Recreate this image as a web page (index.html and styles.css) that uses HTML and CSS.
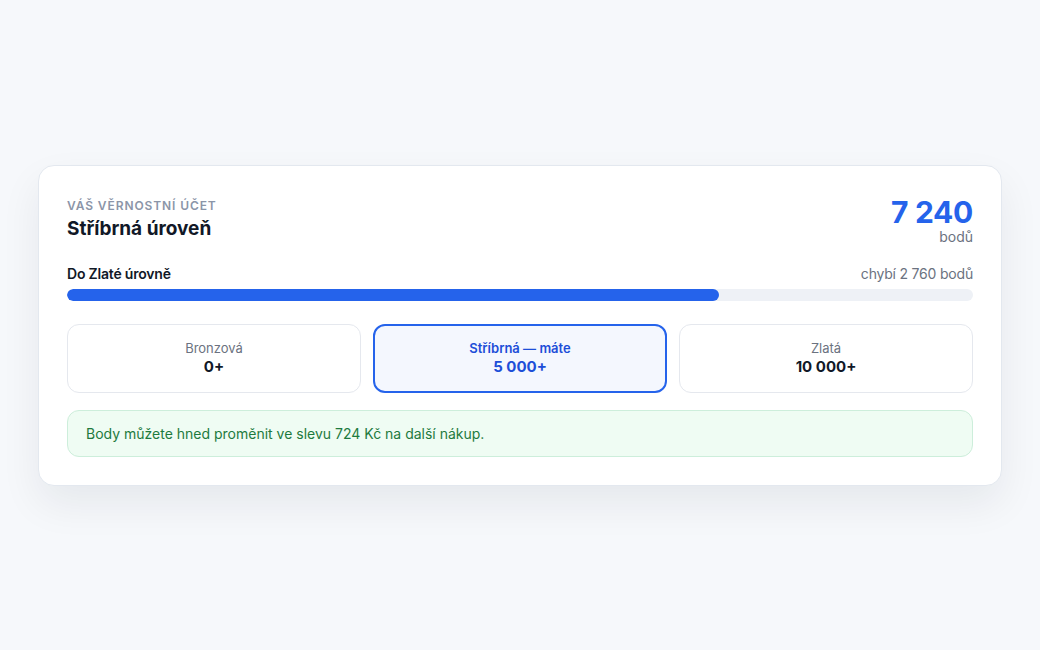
FILE: index.html
```html
<!DOCTYPE html>
<html lang="cs">
<head>
    <meta charset="UTF-8">
    <title>Věrnostní účet</title>
    <link rel="stylesheet" href="styles.css">
</head>
<body>
<div class="card">
    <div class="head">
        <div>
            <div class="eyebrow">Váš věrnostní účet</div>
            <h1 class="title">Stříbrná úroveň</h1>
        </div>
        <div class="points">
            <div class="points-num">7 240</div>
            <div class="points-unit">bodů</div>
        </div>
    </div>

    <div class="progress-row">
        <span class="progress-label">Do Zlaté úrovně</span>
        <span class="progress-left">chybí 2 760 bodů</span>
    </div>
    <div class="bar">
        <div class="bar-fill" style="width: 72%"></div>
    </div>

    <ul class="tiers">
        <li>
            <span class="tier-name">Bronzová</span>
            <span class="tier-min">0+</span>
        </li>
        <li class="current">
            <span class="tier-name">Stříbrná — máte</span>
            <span class="tier-min">5 000+</span>
        </li>
        <li>
            <span class="tier-name">Zlatá</span>
            <span class="tier-min">10 000+</span>
        </li>
    </ul>

    <div class="note">Body můžete hned proměnit ve slevu 724 Kč na další nákup.</div>
</div>
</body>
</html>
```

FILE: styles.css
```css
* {
    margin: 0;
    padding: 0;
    box-sizing: border-box;
}

html, body {
    height: 100%;
}

body {
    background-color: #f6f8fb;
    font-family: Inter, "Noto Sans", sans-serif;
    color: #0f172a;
    display: flex;
    align-items: center;
    justify-content: center;
}

.card {
    width: 964px;
    background-color: #fff;
    border: 1px solid #e3e8ef;
    border-radius: 16px;
    padding: 28px;
    box-shadow: 0 18px 40px rgba(15, 23, 42, 0.07);
}

.head {
    display: flex;
    justify-content: space-between;
    align-items: flex-start;
}

.eyebrow {
    font-size: 12px;
    line-height: 16px;
    font-weight: 600;
    letter-spacing: 0.9px;
    text-transform: uppercase;
    color: #8b95a8;
    margin-top: 4px;
}

.title {
    font-size: 19px;
    line-height: 26px;
    font-weight: 700;
    color: #111827;
    margin-top: 2px;
}

.points {
    text-align: right;
}

.points-num {
    font-size: 30px;
    line-height: 36px;
    font-weight: 700;
    color: #2563eb;
    letter-spacing: -0.3px;
}

.points-unit {
    font-size: 14px;
    line-height: 16px;
    color: #6b7280;
    margin-top: -1px;
}

.progress-row {
    display: flex;
    justify-content: space-between;
    font-size: 14px;
    line-height: 20px;
    letter-spacing: -0.2px;
    margin-top: 19px;
}

.progress-label {
    font-weight: 600;
    color: #111827;
}

.progress-left {
    color: #6b7280;
}

.bar {
    height: 12px;
    background-color: #eef1f6;
    border-radius: 6px;
    margin-top: 5px;
    overflow: hidden;
}

.bar-fill {
    height: 100%;
    background-color: #2563eb;
    border-radius: 6px;
}

.tiers {
    list-style: none;
    display: grid;
    grid-template-columns: repeat(3, 1fr);
    gap: 12px;
    margin-top: 23px;
}

.tiers li {
    display: flex;
    flex-direction: column;
    align-items: center;
    justify-content: center;
    border: 1px solid #e5e8ee;
    border-radius: 12px;
    padding: 14px 10px;
    height: 69px;
}

.tier-name {
    font-size: 13px;
    line-height: 18px;
    color: #6b7280;
}

.tier-min {
    font-size: 15px;
    line-height: 20px;
    font-weight: 700;
    color: #111827;
}

.tiers li.current {
    border: 2px solid #2563eb;
    background-color: #f4f7fe;
}

.tiers li.current .tier-name {
    font-weight: 600;
    color: #1d4ed8;
}

.tiers li.current .tier-min {
    color: #1d4ed8;
}

.note {
    margin-top: 17px;
    padding: 13px 18px;
    background-color: #effcf3;
    border: 1px solid #cdeedb;
    border-radius: 12px;
    font-size: 14px;
    line-height: 19px;
    color: #1e7a3e;
}
```
